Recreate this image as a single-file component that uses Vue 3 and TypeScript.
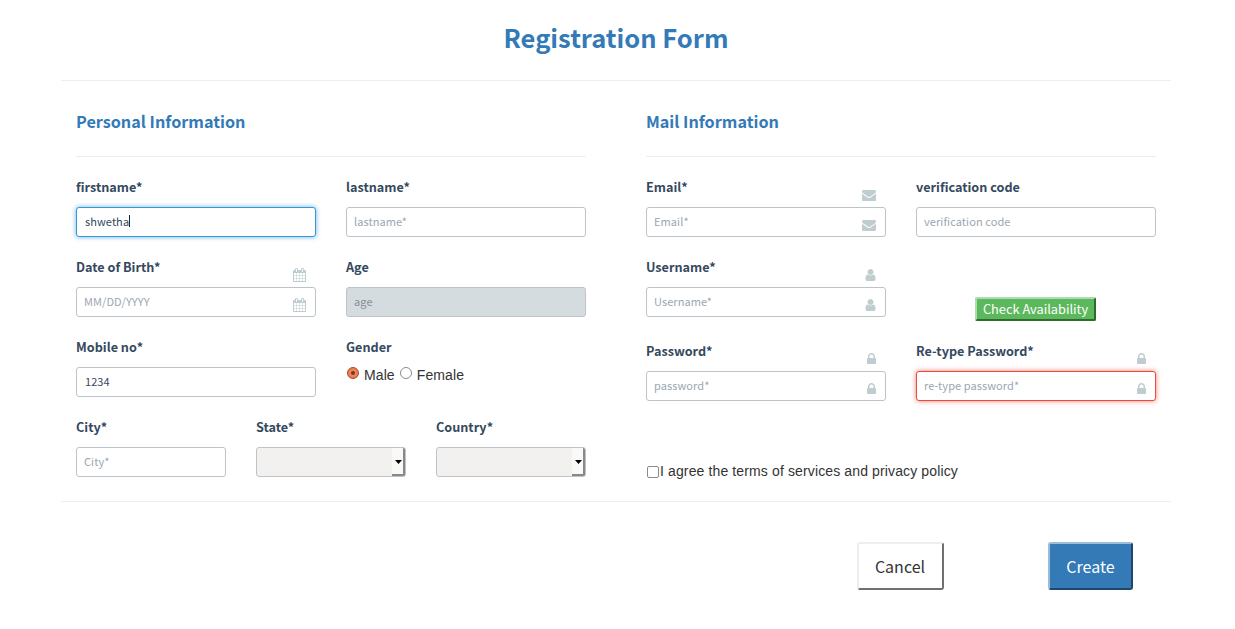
<script setup lang="ts">
import { ref } from 'vue'

type IconName = 'calendar' | 'envelope' | 'user' | 'lock'

const icons: Record<IconName, string> = {
  calendar:
    'M192 1664h288v-288h-288v288zm352 0h320v-288h-320v288zm-352-352h288v-320h-288v320zm352 0h320v-320h-320v320zm-352-384h288v-288h-288v288zm736 736h320v-288h-320v288zm-384-736h320v-288h-320v288zm768 736h288v-288h-288v288zm-384-352h320v-320h-320v320zm-352-864v-288q0-13-9.5-22.5t-22.5-9.5h-64q-13 0-22.5 9.5t-9.5 22.5v288q0 13 9.5 22.5t22.5 9.5h64q13 0 22.5-9.5t9.5-22.5zm736 864h288v-320h-288v320zm-384-384h320v-288h-320v288zm384 0h288v-288h-288v288zm32-480v-288q0-13-9.5-22.5t-22.5-9.5h-64q-13 0-22.5 9.5t-9.5 22.5v288q0 13 9.5 22.5t22.5 9.5h64q13 0 22.5-9.5t9.5-22.5zm384-64v1280q0 52-38 90t-90 38h-1408q-52 0-90-38t-38-90v-1280q0-52 38-90t90-38h128v-96q0-66 47-113t113-47h64q66 0 113 47t47 113v96h384v-96q0-66 47-113t113-47h64q66 0 113 47t47 113v96h128q52 0 90 38t38 90z',
  envelope:
    'M1792 710v794q0 66-47 113t-113 47h-1472q-66 0-113-47t-47-113v-794q44 49 101 87 362 246 497 345 57 42 92.5 65.5t94.5 48 110 24.5h2q51 0 110-24.5t94.5-48 92.5-65.5q170-123 498-345 57-39 100-87zm0-294q0 79-49 151t-122 123q-376 261-468 325-10 7-42.5 31t-54 38.5-52 32.5-57.5 27-50 9h-2q-23 0-50-9t-57.5-27-52-32.5-54-38.5-42.5-31q-91-64-262-182.5t-205-142.5q-62-42-117-115.5t-55-136.5q0-78 41.5-130t118.5-52h1472q65 0 112.5 47t47.5 113z',
  user:
    'M1536 1399q0 109-62.5 187t-150.5 78h-854q-88 0-150.5-78t-62.5-187q0-85 8.5-160.5t31.5-152 58.5-131 94-89 134.5-34.5q131 128 313 128t313-128q76 0 134.5 34.5t94 89 58.5 131 31.5 152 8.5 160.5zm-256-887q0 159-112.5 271.5t-271.5 112.5-271.5-112.5-112.5-271.5 112.5-271.5 271.5-112.5 271.5 112.5 112.5 271.5z',
  lock:
    'M640 768h512v-192q0-106-75-181t-181-75-181 75-75 181v192zm832 96v576q0 40-28 68t-68 28h-960q-40 0-68-28t-28-68v-576q0-40 28-68t68-28h32v-192q0-184 132-316t316-132 316 132 132 316v192h32q40 0 68 28t28 68z',
}

interface Field {
  id: string
  label: string
  placeholder?: string
  value?: string
  icon?: IconName
  kind?: 'text' | 'focused' | 'select' | 'radio' | 'button'
  disabled?: boolean
  invalid?: boolean
}

const personal: Field[] = [
  { id: 'firstname', label: 'firstname*', value: 'shwetha', kind: 'focused' },
  { id: 'lastname', label: 'lastname*', placeholder: 'lastname*' },
  { id: 'dob', label: 'Date of Birth*', placeholder: 'MM/DD/YYYY', icon: 'calendar' },
  { id: 'age', label: 'Age', placeholder: 'age', disabled: true },
  { id: 'mobile', label: 'Mobile no*', value: '1234' },
  { id: 'gender', label: 'Gender', kind: 'radio' },
]

const address: Field[] = [
  { id: 'city', label: 'City*', placeholder: 'City*' },
  { id: 'state', label: 'State*', kind: 'select' },
  { id: 'country', label: 'Country*', kind: 'select' },
]

const mail: Field[] = [
  { id: 'email', label: 'Email*', placeholder: 'Email*', icon: 'envelope' },
  { id: 'code', label: 'verification code', placeholder: 'verification code' },
  { id: 'username', label: 'Username*', placeholder: 'Username*', icon: 'user' },
  { id: 'check', label: '', kind: 'button' },
  { id: 'password', label: 'Password*', placeholder: 'password*', icon: 'lock' },
  { id: 'retype', label: 'Re-type Password*', placeholder: 're-type password*', icon: 'lock', invalid: true },
]

const groups = [
  { title: 'Personal Information', cls: 'personal', grids: [{ cols: 'two', fields: personal }, { cols: 'three', fields: address }] },
  { title: 'Mail Information', cls: 'mail', grids: [{ cols: 'two', fields: mail }] },
]

const gender = ref('Male')
const agreed = ref(false)
</script>

<template>
  <form class="page" @submit.prevent>
    <h1>Registration Form</h1>
    <div class="body">
      <section v-for="g in groups" :key="g.title" :class="g.cls">
        <h2>{{ g.title }}</h2>
        <div v-for="grid in g.grids" :key="grid.cols" class="grid" :class="grid.cols">
          <div v-for="f in grid.fields" :key="f.id" class="field">
            <button v-if="f.kind === 'button'" type="button" class="check">Check Availability</button>
            <template v-else>
              <label class="label" :for="f.id">{{ f.label }}</label>
              <div v-if="f.kind === 'focused'" :id="f.id" class="control focused" role="textbox">
                <span class="typed">{{ f.value }}</span><span class="caret"></span>
              </div>
              <div v-else-if="f.kind === 'select'" :id="f.id" class="control select" role="combobox">
                <span class="drop"><svg width="7" height="4" viewBox="0 0 7 4"><path d="M0 0h7L3.5 4z" /></svg></span>
              </div>
              <div v-else-if="f.kind === 'radio'" class="radios">
                <label v-for="o in ['Male', 'Female']" :key="o" @click="gender = o">
                  <span class="radio" :class="{ on: gender === o }"></span>{{ o }}
                </label>
              </div>
              <input
                v-else
                :id="f.id"
                class="control"
                :class="{ invalid: f.invalid }"
                :placeholder="f.placeholder"
                :value="f.value"
                :disabled="f.disabled"
              />
            </template>
            <template v-if="f.icon">
              <svg v-for="n in 2" :key="n" class="icon" :class="[f.icon, 'at' + n]" viewBox="0 0 1792 1792">
                <path :d="icons[f.icon]" />
              </svg>
            </template>
          </div>
        </div>
        <label v-if="g.cls === 'mail'" class="agree" @click="agreed = !agreed">
          <span class="box" :class="{ on: agreed }"></span>I agree the terms of services and privacy policy
        </label>
      </section>
    </div>
    <div class="actions">
      <button type="button" class="btn cancel">Cancel</button>
      <button type="submit" class="btn create">Create</button>
    </div>
  </form>
</template>

<style>
body {
  background: #fff;
}
</style>

<style scoped>
* {
  box-sizing: border-box;
}
.page {
  width: 1110px;
  height: 629px;
  margin-left: 61px;
  font-family: 'Noto Sans CJK SC', 'Noto Sans', sans-serif;
  color: #34495e;
}
h1 {
  margin: 0;
  height: 81px;
  padding-top: 17px;
  border-bottom: 1px solid #eee;
  font-size: 25.5px;
  line-height: 40px;
  font-weight: 700;
  text-align: center;
  color: #337ab7;
}
.body {
  display: grid;
  grid-template-columns: 510px 510px;
  column-gap: 60px;
  height: 421px;
  padding: 0 15px;
  border-bottom: 1px solid #eee;
}
h2 {
  margin: 0 0 20px;
  height: 76px;
  padding-top: 28px;
  border-bottom: 1px solid #eee;
  font-size: 16.2px;
  line-height: 24px;
  font-weight: 700;
  color: #337ab7;
}
.grid {
  display: grid;
  gap: 20px 30px;
  margin-bottom: 20px;
}
.two {
  grid-template-columns: 240px 240px;
  grid-auto-rows: 60px;
}
.three {
  grid-template-columns: repeat(3, 150px);
}
.mail .two {
  grid-template-rows: 60px 64px 60px;
}
.field {
  position: relative;
  display: flex;
  flex-direction: column;
}
.label {
  height: 20px;
  margin-bottom: 10px;
  font-size: 12.65px;
  line-height: 20px;
  font-weight: 700;
  white-space: nowrap;
}
.control {
  width: 100%;
  height: 30px;
  padding: 0 8px 2px;
  border: 1px solid #bdc3c7;
  border-radius: 3px;
  background: #fff;
  font-family: inherit;
  font-size: 11px;
  line-height: 26px;
  letter-spacing: 0.08px;
  color: #34495e;
  outline: none;
}
.control:placeholder-shown {
  padding-left: 7px;
}
.control::placeholder {
  color: #9aa6b2;
  opacity: 1;
}
.control:disabled {
  background: #d5dbdf;
  background: #d5dcdf;
}
.control:disabled::placeholder {
  color: #85909a;
}
.focused {
  display: flex;
  align-items: center;
  border-color: #3498db;
  box-shadow: 0 0 5px rgba(52, 152, 219, 0.75);
}
.caret {
  width: 1px;
  height: 12px;
  background: #1c2733;
}
.invalid {
  border-color: #e74c3c;
  box-shadow: 0 0 5px rgba(231, 76, 60, 0.75);
}
.select {
  display: flex;
  justify-content: flex-end;
  padding: 0;
  background: #f2f1f0;
}
.drop {
  display: flex;
  align-items: center;
  justify-content: center;
  width: 13px;
  height: 28px;
  padding: 1px 0 0 1px;
  border-right: 2px solid #888;
  border-bottom: 2px solid #888;
  border-radius: 0 2px 2px 0;
  background: #f9f9f8;
}
.drop svg {
  flex: none;
  fill: #000;
}
.radios {
  display: flex;
  gap: 4px;
  margin-top: -2px;
  font-family: 'Liberation Sans', Arial, sans-serif;
  font-size: 14px;
  line-height: 20px;
  letter-spacing: 0.1px;
  color: #333;
}
.radios label {
  display: flex;
}
.radio {
  width: 12px;
  height: 12px;
  margin: 2px 5px 0 1px;
  border: 1px solid #8f8b87;
  border-radius: 50%;
  background: #fff;
}
.radio.on {
  border-color: #a5482a;
  background: radial-gradient(circle, #70402f 0 1.5px, #f3875a 2.5px, #f0774a 5px);
}
.icon {
  position: absolute;
  width: 14px;
  height: 14px;
  fill: #bfcdd1;
}
.at1 {
  top: 11px;
}
.at2 {
  top: 41px;
}
.calendar {
  right: 10px;
  transform: translateX(0.5px);
}
.envelope {
  right: 10px;
}
.user {
  right: 9px;
  transform: translateX(0.5px);
}
.lock {
  right: 8px;
  transform: translateX(0.5px);
}
.check {
  align-self: center;
  width: 121px;
  height: 24px;
  margin: 40px 1px 0 0;
  padding: 0;
  border: 2px solid;
  border-color: #aedcae #2e6c2e #2e6c2e #aedcae;
  border-radius: 2px;
  background: #5cb85c;
  font-family: inherit;
  font-size: 12.8px;
  line-height: 20px;
  color: #fff;
  white-space: nowrap;
}
.agree {
  display: flex;
  margin-top: 60px;
  font-family: 'Liberation Sans', Arial, sans-serif;
  font-size: 14px;
  line-height: 20px;
  letter-spacing: 0.127px;
  color: #333;
  white-space: nowrap;
}
.box {
  width: 12px;
  height: 12px;
  margin: 5px 1px 0;
  border: 1px solid #8f8b87;
  border-radius: 2px;
  background: #fff;
}
.box.on {
  background: #34495e;
}
.actions {
  display: flex;
  justify-content: flex-end;
  gap: 104px;
  padding: 40px 38px 0 0;
}
.btn {
  height: 48px;
  padding: 0;
  border: 2px solid;
  border-radius: 3px;
  font-family: inherit;
  font-size: 16px;
  line-height: 44px;
}
.cancel {
  width: 87px;
  padding-right: 1px;
  border-color: #eee #707070 #707070 #eee;
  background: #fff;
  color: #333;
}
.create {
  width: 85px;
  border-color: #99bddb #1e476b #1e476b #99bddb;
  background: #337ab7;
  color: #fff;
}
</style>
